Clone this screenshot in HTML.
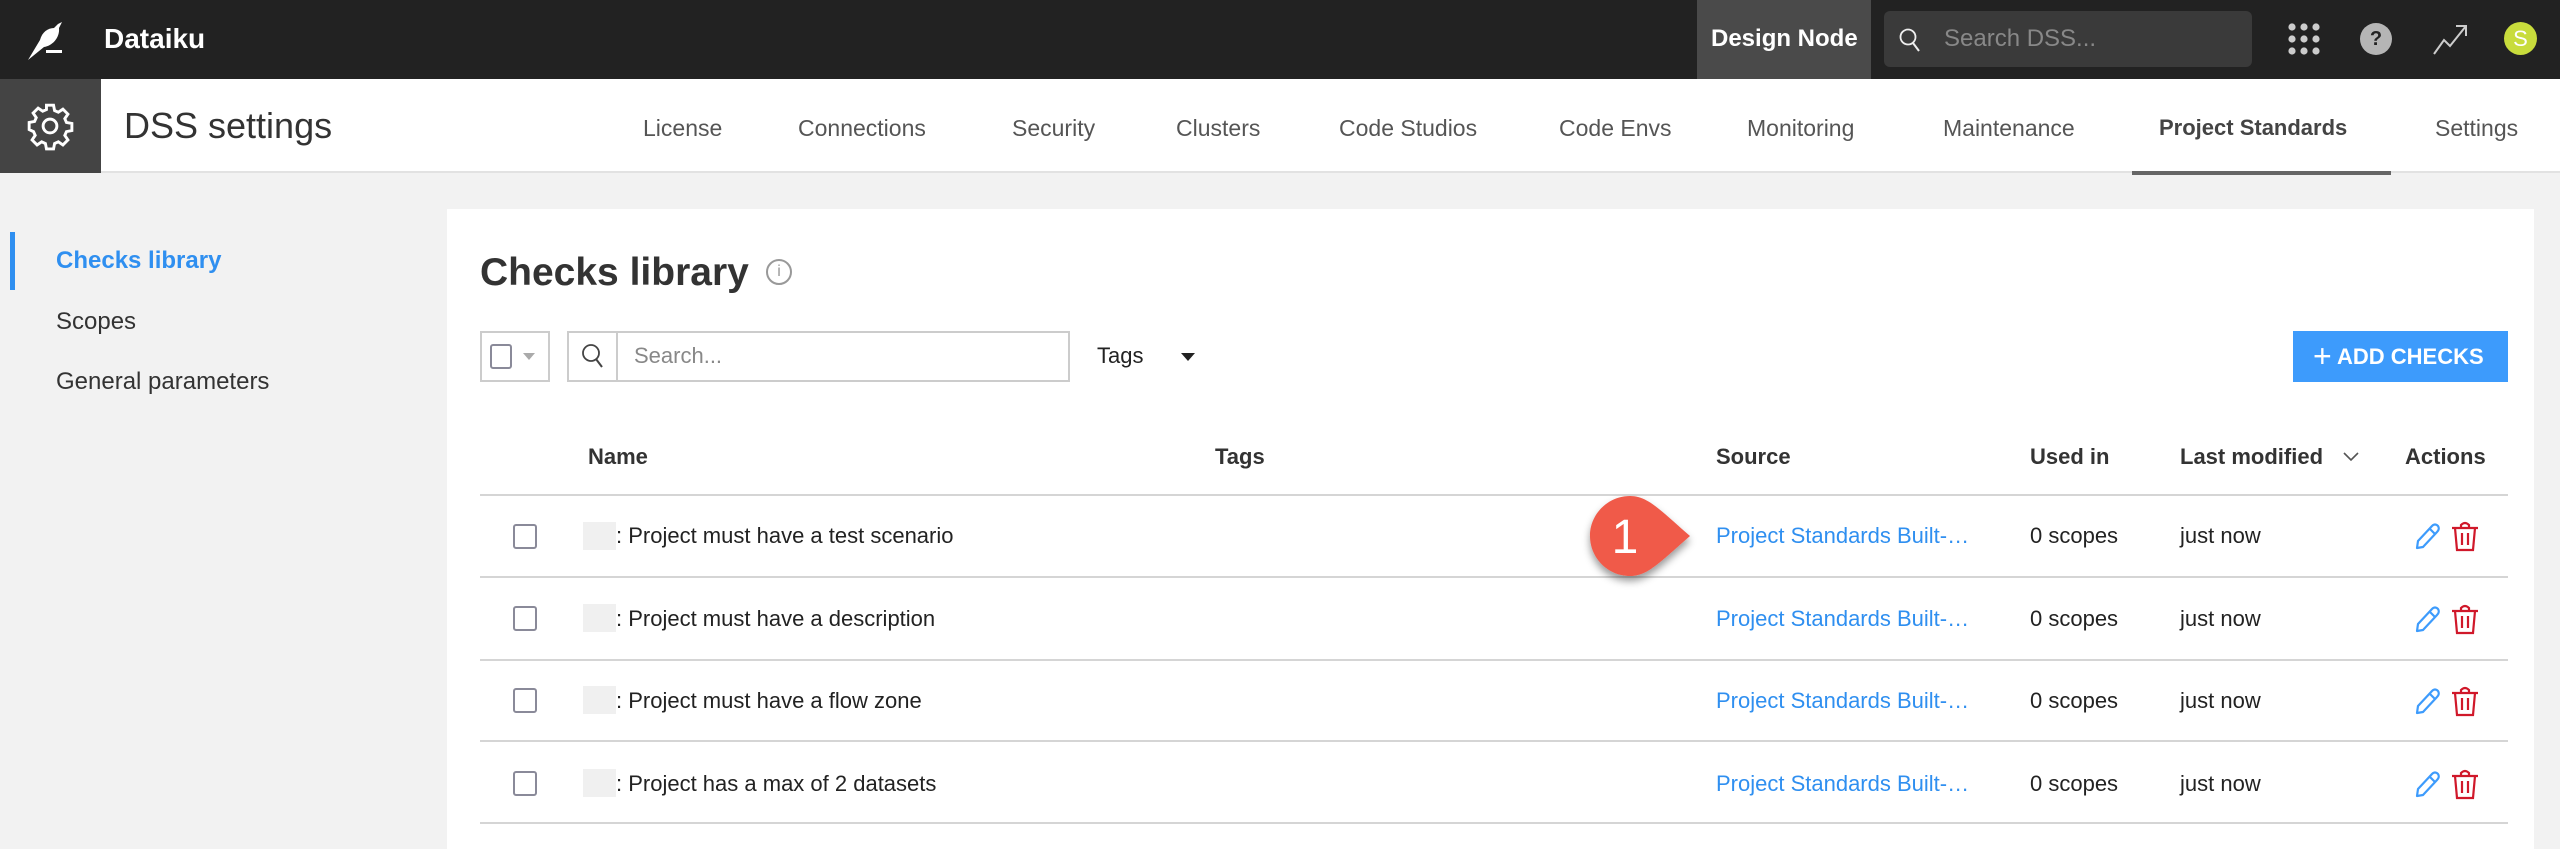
<!DOCTYPE html>
<html><head><meta charset="utf-8"><style>
*{box-sizing:border-box;margin:0;padding:0}
body{width:2560px;height:826px;overflow:hidden;background:#f2f2f2;font-family:"Liberation Sans",sans-serif;position:relative;color:#222}
.a{position:absolute;white-space:nowrap}
.top{position:absolute;left:0;top:0;width:2560px;height:79px;background:#222}
.sub{position:absolute;left:0;top:79px;width:2560px;height:94px;background:#fff;border-bottom:2px solid #e2e2e2}
.tab{position:absolute;top:113px;font-size:23px;color:#555;line-height:30px}
.panel{position:absolute;left:447px;top:209px;width:2087px;height:640px;background:#fff}
.th{position:absolute;top:443px;font-size:22px;font-weight:bold;color:#333;line-height:28px}
.hl{position:absolute;left:480px;width:2028px;height:2px;background:#d5d5d5}
.cb{position:absolute;left:513px;width:24px;height:25px;border:2px solid #8a8a99;border-radius:3px;background:#fff}
.ph{position:absolute;left:583px;width:33px;height:28px;background:#f0f0f0}
.tx{position:absolute;font-size:22px;line-height:28px;color:#222}
.lk{color:#2f8ff0}
</style></head><body>
<div class="top"></div>
<svg class="a" style="left:26px;top:18px" width="44" height="44" viewBox="0 0 44 44"><path d="M2 42 L14 22 C16 14 22 10 28 10 L32 6 L36 4 L33 10 C34 20 26 28 18 29 Z" fill="#fff"/><rect x="20" y="32" width="16" height="3" fill="#fff"/></svg>
<div class="a" style="left:104px;top:22px;font-size:28px;font-weight:bold;color:#fff;line-height:34px">Dataiku</div>
<div class="a" style="left:1697px;top:0;width:174px;height:79px;background:#4a4a4a"></div>
<div class="a" style="left:1711px;top:22px;font-size:24px;font-weight:bold;color:#fff;line-height:34px">Design Node</div>
<div class="a" style="left:1884px;top:11px;width:368px;height:56px;background:#3a3a3a;border-radius:6px"></div>
<svg class="a" style="left:1898px;top:27px" width="24" height="26" viewBox="0 0 24 26"><circle cx="10" cy="10" r="7.5" fill="none" stroke="#eee" stroke-width="1.8"/><path d="M15 16 L21 24" stroke="#eee" stroke-width="2"/></svg>
<div class="a" style="left:1944px;top:22px;font-size:24px;color:#888;line-height:34px">Search DSS...</div>
<svg class="a" style="left:2287px;top:22px" width="34" height="34" viewBox="0 0 34 34" fill="#ccc"><circle cx="5" cy="5" r="3.6"/><circle cx="17" cy="5" r="3.6"/><circle cx="29" cy="5" r="3.6"/><circle cx="5" cy="17" r="3.6"/><circle cx="17" cy="17" r="3.6"/><circle cx="29" cy="17" r="3.6"/><circle cx="5" cy="29" r="3.6"/><circle cx="17" cy="29" r="3.6"/><circle cx="29" cy="29" r="3.6"/></svg>
<div class="a" style="left:2360px;top:23px;width:32px;height:32px;border-radius:50%;background:#b5b5b5;color:#222;font-size:20px;font-weight:bold;text-align:center;line-height:32px">?</div>
<svg class="a" style="left:2432px;top:22px" width="38" height="34" viewBox="0 0 38 34"><path d="M2 32 L12 18 L18 24 L34 4 M24 4 L34 4 L34 14" fill="none" stroke="#ccc" stroke-width="2"/></svg>
<div class="a" style="left:2504px;top:22px;width:33px;height:33px;border-radius:50%;background:#c8dc3c;color:#fff;font-size:22px;text-align:center;line-height:33px">S</div>

<div class="sub"></div>
<div class="a" style="left:0;top:79px;width:101px;height:94px;background:#444"></div>
<svg class="a" style="left:25px;top:101px" width="50" height="50" viewBox="0 0 24 24"><path fill="none" stroke="#fff" stroke-width="1.4" d="M10.3 2h3.4l.5 2.6 1.8.8 2.2-1.5 2.4 2.4-1.5 2.2.8 1.8 2.6.5v3.4l-2.6.5-.8 1.8 1.5 2.2-2.4 2.4-2.200-1.5-1.8.8-.5 2.6h-3.4l-.5-2.6-1.8-.8-2.2 1.5-2.4-2.4 1.5-2.2-.8-1.8L2 13.7v-3.4l2.6-.5.8-1.8-1.5-2.2 2.4-2.4 2.2 1.5 1.8-.8z"/><circle cx="12" cy="12" r="3.3" fill="none" stroke="#fff" stroke-width="1.4"/></svg>
<div class="a" style="left:124px;top:104px;font-size:36px;color:#333;line-height:44px">DSS settings</div>
<div class="tab" style="left:643px">License</div>
<div class="tab" style="left:798px">Connections</div>
<div class="tab" style="left:1012px">Security</div>
<div class="tab" style="left:1176px">Clusters</div>
<div class="tab" style="left:1339px">Code Studios</div>
<div class="tab" style="left:1559px">Code Envs</div>
<div class="tab" style="left:1747px">Monitoring</div>
<div class="tab" style="left:1943px">Maintenance</div>
<div class="tab" style="left:2159px;font-weight:bold;color:#444;font-size:22px">Project Standards</div>
<div class="tab" style="left:2435px">Settings</div>
<div class="a" style="left:2132px;top:171px;width:259px;height:4px;background:#666"></div>

<div class="a" style="left:10px;top:232px;width:5px;height:58px;background:#2f8ff0"></div>
<div class="a" style="left:56px;top:247px;font-size:24px;font-weight:bold;color:#2f8ff0;line-height:28px">Checks library</div>
<div class="a" style="left:56px;top:308px;font-size:24px;color:#333;line-height:28px">Scopes</div>
<div class="a" style="left:56px;top:368px;font-size:24px;color:#333;line-height:28px">General parameters</div>

<div class="panel"></div>
<div class="a" style="left:480px;top:250px;font-size:39px;font-weight:bold;color:#333;line-height:46px">Checks library</div>
<div class="a" style="left:766px;top:259px;width:26px;height:26px;border:2px solid #999;border-radius:50%;color:#999;font-size:16px;text-align:center;line-height:22px">i</div>
<div class="a" style="left:480px;top:331px;width:70px;height:51px;border:2px solid #ccc"></div>
<div class="a" style="left:490px;top:344px;width:22px;height:25px;border:2px solid #8a8a99;border-radius:3px"></div>
<div class="a" style="left:523px;top:353px;width:0;height:0;border-left:6px solid transparent;border-right:6px solid transparent;border-top:7px solid #aaa"></div>
<div class="a" style="left:567px;top:331px;width:503px;height:51px;border:2px solid #ccc"></div>
<div class="a" style="left:616px;top:331px;width:2px;height:51px;background:#ccc"></div>
<svg class="a" style="left:580px;top:342px" width="26" height="28" viewBox="0 0 26 28"><circle cx="11" cy="11" r="8" fill="none" stroke="#444" stroke-width="1.8"/><path d="M16 17 L22 25" stroke="#444" stroke-width="2"/></svg>
<div class="a" style="left:634px;top:342px;font-size:22px;color:#888;line-height:28px">Search...</div>
<div class="a" style="left:1097px;top:342px;font-size:22px;color:#222;line-height:28px">Tags</div>
<div class="a" style="left:1181px;top:353px;width:0;height:0;border-left:7px solid transparent;border-right:7px solid transparent;border-top:8px solid #222"></div>
<div class="a" style="left:2293px;top:331px;width:215px;height:51px;background:#3d9bfc;color:#fff;font-size:22px;font-weight:bold;line-height:51px;padding-left:20px"><span style="font-weight:normal;font-size:32px;vertical-align:-3px">+</span> ADD CHECKS</div>

<div class="th" style="left:588px">Name</div>
<div class="th" style="left:1215px">Tags</div>
<div class="th" style="left:1716px">Source</div>
<div class="th" style="left:2030px">Used in</div>
<div class="th" style="left:2180px">Last modified</div>
<svg class="a" style="left:2342px;top:450px" width="18" height="14" viewBox="0 0 18 14"><path d="M2 3 L9 10 L16 3" fill="none" stroke="#555" stroke-width="1.6"/></svg>
<div class="th" style="left:2405px">Actions</div>
<div class="hl" style="top:494px"></div>
<div class="hl" style="top:576px"></div>
<div class="hl" style="top:659px"></div>
<div class="hl" style="top:740px"></div>
<div class="hl" style="top:822px"></div>

<div class="cb" style="top:524px"></div><div class="ph" style="top:522px"></div>
<div class="tx" style="left:616px;top:522px">: Project must have a test scenario</div>
<div class="tx lk" style="left:1716px;top:522px">Project Standards Built-…</div>
<div class="tx" style="left:2030px;top:522px">0 scopes</div>
<div class="tx" style="left:2180px;top:522px">just now</div>

<div class="cb" style="top:606px"></div><div class="ph" style="top:604px"></div>
<div class="tx" style="left:616px;top:605px">: Project must have a description</div>
<div class="tx lk" style="left:1716px;top:605px">Project Standards Built-…</div>
<div class="tx" style="left:2030px;top:605px">0 scopes</div>
<div class="tx" style="left:2180px;top:605px">just now</div>

<div class="cb" style="top:688px"></div><div class="ph" style="top:686px"></div>
<div class="tx" style="left:616px;top:687px">: Project must have a flow zone</div>
<div class="tx lk" style="left:1716px;top:687px">Project Standards Built-…</div>
<div class="tx" style="left:2030px;top:687px">0 scopes</div>
<div class="tx" style="left:2180px;top:687px">just now</div>

<div class="cb" style="top:771px"></div><div class="ph" style="top:769px"></div>
<div class="tx" style="left:616px;top:770px">: Project has a max of 2 datasets</div>
<div class="tx lk" style="left:1716px;top:770px">Project Standards Built-…</div>
<div class="tx" style="left:2030px;top:770px">0 scopes</div>
<div class="tx" style="left:2180px;top:770px">just now</div>

<svg class="a" style="left:2412px;top:520px" width="72" height="300" viewBox="0 0 72 300">
<defs><g id="ic"><path d="M5 28 L6 21 L20 6 Q23 3 26 6 Q28 9 25 12 L11 27 Z M18 9 L23 14" fill="none" stroke="#3d9bfc" stroke-width="2.2" stroke-linejoin="round"/><g fill="none" stroke="#d0182a" stroke-width="2.2"><path d="M40 8 H66 M49 8 V5 Q53 1 57 5 V8 M43 8 L45 30 H61 L63 8 M50 13 V25 M56 13 V25"/></g></g></defs>
<use href="#ic" y="0"/><use href="#ic" y="83"/><use href="#ic" y="165"/><use href="#ic" y="248"/>
</svg>

<svg class="a" style="left:1580px;top:490px" width="130" height="100" viewBox="0 0 130 100">
<defs><filter id="sh" x="-30%" y="-30%" width="160%" height="170%"><feDropShadow dx="0" dy="5" stdDeviation="4" flood-color="#000" flood-opacity="0.4"/></filter></defs>
<path d="M50 6 C68 6 80 20 110 46 C80 72 68 86 50 86 C28 86 10 68 10 46 C10 24 28 6 50 6 Z" fill="#f05a4a" filter="url(#sh)"/>
<text x="45" y="63" fill="#fff" font-family="Liberation Sans, sans-serif" font-size="48" text-anchor="middle">1</text>
</svg>
</body></html>
